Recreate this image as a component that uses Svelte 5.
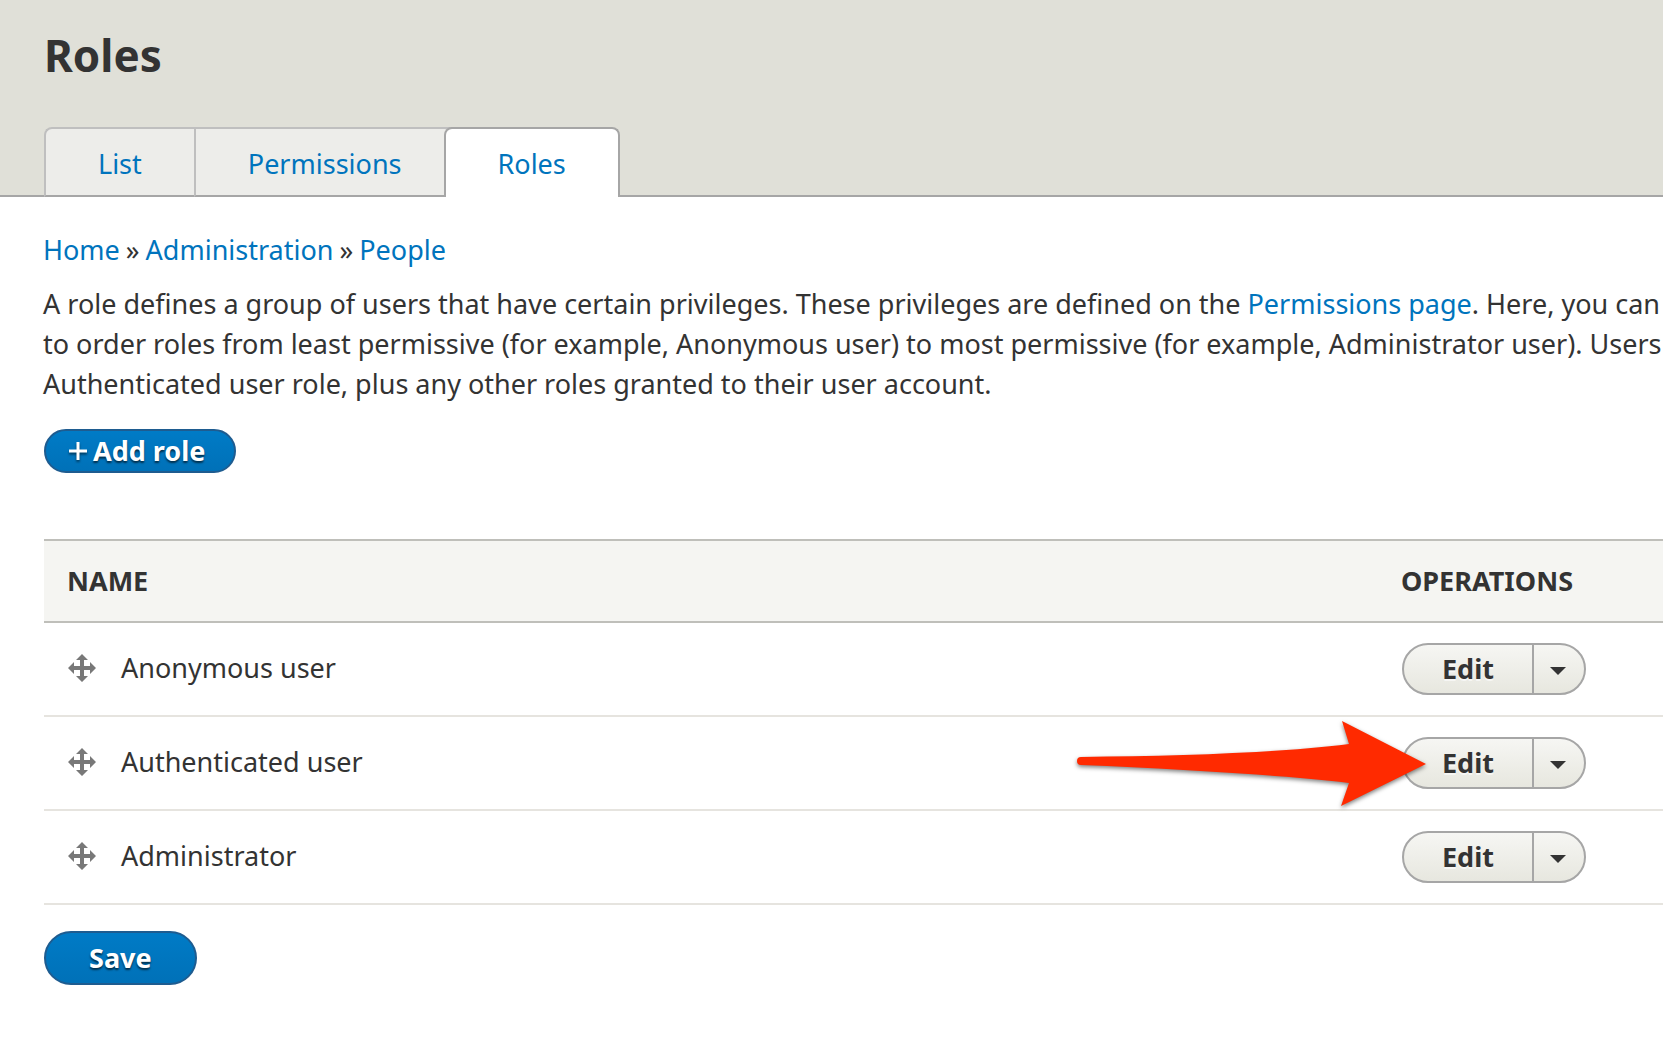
<script>
  const tabs = [
    { label: 'List', active: false },
    { label: 'Permissions', active: false },
    { label: 'Roles', active: true }
  ];
  const crumbs = ['Home', 'Administration', 'People'];
  const roles = [
    { name: 'Anonymous user', highlighted: false },
    { name: 'Authenticated user', highlighted: true },
    { name: 'Administrator', highlighted: false }
  ];
</script>

<div class="page">
  <header>
    <h1>Roles</h1>
    <nav class="tabs" aria-label="Primary tabs">
      {#each tabs as tab}
        <a href="#{tab.label.toLowerCase()}" class:active={tab.active}>{tab.label}</a>
      {/each}
    </nav>
  </header>

  <main>
    <nav class="breadcrumb" aria-label="Breadcrumb">
      {#each crumbs as crumb, i}
        {#if i > 0}<span>»</span>{/if}
        <a href="#{crumb.toLowerCase()}">{crumb}</a>
      {/each}
    </nav>

    <p class="help">
      A role defines a group of users that have certain privileges. These privileges are defined on the <a href="#permissions-page">Permissions page</a>. Here, you can<br />
      to order roles from least permissive (for example, Anonymous user) to most permissive (for example, Administrator user). Users<br />
      Authenticated user role, plus any other roles granted to their user account.
    </p>

    <a class="primary add" href="#add-role">
      <svg class="plus" viewBox="0 0 18 18" aria-hidden="true"><path d="M9 0v18M0 9h18" /></svg>
      Add role
    </a>

    <table>
      <thead>
        <tr><th>Name</th><th class="ops">Operations</th></tr>
      </thead>
      <tbody>
        {#each roles as role}
          <tr>
            <td>
              <div class="name">
                <svg class="handle" viewBox="0 0 28 28" aria-hidden="true">
                  <path d="M14 0 20 6H16V12H22V8L28 14 22 20V16H16V22H20L14 28 8 22H12V16H6V20L0 14 6 8V12H12V6H8Z" />
                </svg>
                {role.name}
              </div>
            </td>
            <td class="ops">
              <div class="dropbutton">
                <button type="button" class="edit">Edit</button>
                <button type="button" class="toggle" aria-label="List additional actions">
                  <svg viewBox="0 0 16 8" aria-hidden="true"><path d="M0 0h16L8 8z" /></svg>
                </button>
                {#if role.highlighted}
                  <svg class="pointer" viewBox="0 0 360 100" aria-hidden="true">
                    <path d="M12 42 C110 41 210 38 280 29 L273 6 L357 49 L272 91 L280 68 C210 60 110 54 12 50 A4 4 0 0 1 12 42Z" />
                  </svg>
                {/if}
              </div>
            </td>
          </tr>
        {/each}
      </tbody>
    </table>

    <button type="button" class="primary save">Save</button>
  </main>
</div>

<style>
  :global(body) {
    margin: 0;
    background: #fff;
  }
  .page {
    font: 27px/40px "Noto Sans", "Open Sans", sans-serif;
    color: #333;
    overflow: hidden;
  }
  a {
    color: #0074bd;
    text-decoration: none;
  }
  header {
    background: #e0e0d8;
    padding: 27px 44px 0;
    border-bottom: 2px solid #a6a6a6;
  }
  h1 {
    margin: 0 0 44px;
    font-size: 44px;
    line-height: 56px;
    font-weight: 700;
  }
  .tabs {
    display: flex;
    margin-bottom: -2px;
  }
  .tabs a {
    box-sizing: border-box;
    height: 70px;
    padding: 15px 52px 0;
    border: 2px solid #bfbfbf;
    border-right: 0;
    border-bottom-color: #a6a6a6;
    background: #ededea;
  }
  .tabs a:first-child {
    border-top-left-radius: 8px;
  }
  .tabs a.active {
    z-index: 1;
    margin-left: -10px;
    border: 2px solid #a6a6a6;
    border-bottom: 0;
    border-radius: 8px 8px 0 0;
    background: #fff;
  }
  main {
    padding: 33px 0 60px 43px;
  }
  .breadcrumb {
    display: flex;
    gap: 6px;
  }
  .help {
    margin: 14px 0 25px;
    white-space: nowrap;
  }
  .primary {
    box-sizing: border-box;
    display: flex;
    align-items: center;
    width: fit-content;
    margin-left: 1px;
    border: 2px solid #1e5c90;
    border-radius: 30px;
    background: linear-gradient(#007bc6, #0071b8);
    color: #fff;
    font-family: inherit;
    font-size: 27px;
    line-height: 40px;
    font-weight: 700;
    text-shadow: 0 2px 2px rgba(0, 0, 0, 0.6);
  }
  .add {
    height: 44px;
    padding: 0 29px 0 23px;
    gap: 6px;
  }
  .plus {
    width: 18px;
    height: 18px;
    fill: none;
    stroke: #fff;
    stroke-width: 3;
    filter: drop-shadow(0 2px 1px rgba(0, 0, 0, 0.5));
  }
  table {
    width: calc(100% - 1px);
    margin: 66px 0 26px 1px;
    border-collapse: separate;
    border-spacing: 0;
    table-layout: fixed;
  }
  th {
    height: 80px;
    padding: 0 24px 0 23px;
    border-top: 2px solid #bfbfba;
    border-bottom: 2px solid #bfbfba;
    background: #f5f5f2;
    text-align: left;
    text-transform: uppercase;
    font-weight: 700;
  }
  td {
    height: 92px;
    padding: 0 24px;
    border-bottom: 2px solid #e6e4df;
  }
  .ops {
    width: 238px;
  }
  td.ops {
    width: 237px;
  }
  .name {
    display: flex;
    align-items: center;
    gap: 25px;
    padding-bottom: 3px;
  }
  .handle {
    width: 28px;
    height: 28px;
    fill: #787878;
  }
  .dropbutton {
    position: relative;
    box-sizing: border-box;
    display: flex;
    width: 184px;
    height: 52px;
    border: 2px solid #a6a6a6;
    border-radius: 26px;
    background: linear-gradient(#f6f6f3, #e7e7df);
  }
  .dropbutton button {
    padding: 0;
    border: 0;
    background: none;
    color: #333;
    font: inherit;
  }
  .dropbutton .edit {
    flex: 1;
    font-weight: 700;
    text-shadow: 0 2px 0 rgba(255, 255, 255, 0.6);
  }
  .dropbutton .toggle {
    display: flex;
    align-items: center;
    width: 52px;
    padding: 4px 0 0 16px;
    border-left: 2px solid #a6a6a6;
  }
  .toggle svg {
    width: 16px;
    height: 8px;
    fill: #333;
  }
  .pointer {
    position: absolute;
    right: 155px;
    top: -24px;
    width: 360px;
    height: 100px;
    fill: #ff2a00;
    filter: drop-shadow(0 2px 2px rgba(0, 0, 0, 0.5));
    pointer-events: none;
  }
  .save {
    height: 54px;
    padding: 0 43px;
  }
</style>
